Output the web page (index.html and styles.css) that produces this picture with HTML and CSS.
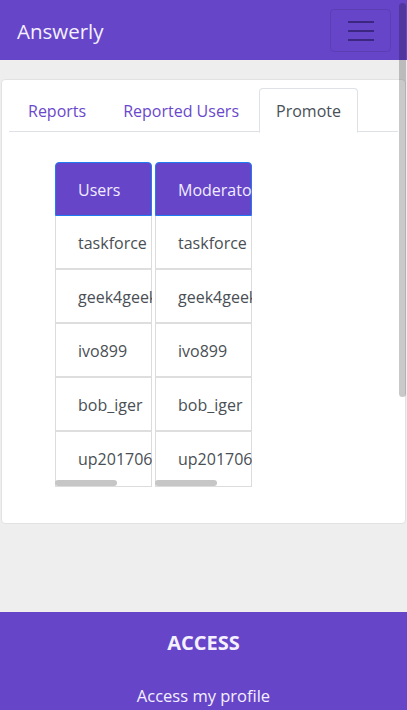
FILE: index.html
```html
<!DOCTYPE html>
<html lang="en">
<head>
<meta charset="utf-8">
<title>Answerly</title>
<link rel="stylesheet" href="styles.css">
</head>
<body>
<nav class="navbar">
  <span class="brand">Answerly</span>
  <button class="toggler" aria-label="Toggle navigation">
    <span class="bar"></span><span class="bar"></span><span class="bar"></span>
  </button>
</nav>
<main class="main">
  <section class="card">
    <ul class="tabs">
      <li class="tab"><a class="tab-link">Reports</a></li>
      <li class="tab"><a class="tab-link">Reported Users</a></li>
      <li class="tab active"><a class="tab-link">Promote</a></li>
    </ul>
    <div class="pane">
      <div class="scroll">
        <div class="col-table">
          <div class="head">Users</div>
          <div class="cell">taskforce</div>
          <div class="cell">geek4geeks</div>
          <div class="cell">ivo899</div>
          <div class="cell">bob_iger</div>
          <div class="cell last">up201706</div>
        </div>
        <div class="hthumb"></div>
      </div>
      <div class="scroll">
        <div class="col-table">
          <div class="head">Moderators</div>
          <div class="cell">taskforce</div>
          <div class="cell">geek4geeks</div>
          <div class="cell">ivo899</div>
          <div class="cell">bob_iger</div>
          <div class="cell last">up201706</div>
        </div>
        <div class="hthumb"></div>
      </div>
    </div>
  </section>
</main>
<footer class="footer">
  <h5 class="foot-title">ACCESS</h5>
  <a class="foot-link">Access my profile</a>
  <a class="foot-link">Log out</a>
</footer>
<div class="page-thumb"></div>
</body>
</html>
```
FILE: styles.css
```css
html { scrollbar-width: none; }
html::-webkit-scrollbar { display: none; }
* { box-sizing: border-box; }
body {
  margin: 0;
  background: #eeeeee;
  font-family: "Open Sans", "Noto Sans", sans-serif;
  color: #495057;
}
.navbar {
  height: 60px;
  background: #6645c9;
  display: flex;
  align-items: center;
  justify-content: space-between;
  padding: 0 16px 0 17px;
}
.brand {
  color: #f4f0ff;
  font-size: 20.5px;
  line-height: 1;
  margin-top: 2px;
}
.toggler {
  width: 61px;
  height: 43px;
  margin-top: 1px;
  background: transparent;
  border: 1px solid rgba(0,0,0,0.1);
  border-radius: 4px;
  display: flex;
  flex-direction: column;
  align-items: center;
  justify-content: center;
  gap: 7px;
  padding: 0;
}
.bar {
  display: block;
  width: 26px;
  height: 2px;
  background: #3b2682;
}
.main {
  padding: 19px 1px 88px 1px;
}
.card {
  background: #fff;
  border: 1px solid #e2e2e2;
  border-radius: 4px;
  padding: 8px 7px 36px 7px;
}
.tabs {
  list-style: none;
  margin: 0;
  padding: 0 0 0 2px;
  display: flex;
  gap: 3px;
  border-bottom: 1px solid #dee2e6;
  height: 44px;
}
.tab {
  margin-bottom: -1px;
}
.tab-link {
  display: block;
  height: 45px;
  padding: 0 16px;
  line-height: 45px;
  font-size: 16px;
  color: #6a48cc;
  border: 1px solid transparent;
  border-radius: 4px 4px 0 0;
}
.tab.active .tab-link {
  color: #495057;
  background: #fff;
  border-color: #dee2e6 #dee2e6 #fff;
}
.pane {
  display: flex;
  gap: 3px;
  padding: 30px 0 0 46px;
}
.scroll {
  position: relative;
  overflow: hidden;
  width: 97px;
}
.col-table {
  display: flex;
  flex-direction: column;
}
.head {
  height: 54px;
  background: #6645c9;
  color: #f1ecff;
  border: 1px solid #1f7cf2;
  border-radius: 4px 4px 0 0;
  padding-left: 22px;
  font-size: 16px;
  line-height: 54px;
  white-space: nowrap;
}
.cell {
  height: 54px;
  border-left: 1px solid #dcdcdc;
  border-right: 1px solid #dcdcdc;
  border-bottom: 2px solid #dedede;
  padding-left: 22px;
  font-size: 16px;
  line-height: 54px;
  white-space: nowrap;
  color: #4a4f55;
}
.cell.last {
  height: 55px;
  border-bottom: 1px solid #dcdcdc;
}
.hthumb {
  position: absolute;
  left: 0;
  bottom: 1px;
  width: 62px;
  height: 6px;
  border-radius: 3px;
  background: #c6c6c6;
}
.footer {
  background: #6645c9;
  color: #f4f0ff;
  text-align: center;
  padding: 17px 0 40px;
  display: flex;
  flex-direction: column;
  align-items: center;
}
.foot-title {
  margin: 0;
  font-size: 20px;
  font-weight: 700;
  line-height: 27px;
}
.foot-link {
  display: block;
  margin-top: 29px;
  font-size: 16.5px;
  line-height: 22px;
}
.foot-link + .foot-link { margin-top: 16px; }
.page-thumb {
  position: fixed;
  right: 1px;
  top: 3px;
  width: 7px;
  height: 394px;
  border-radius: 4px;
  background: rgba(0,0,0,0.21);
}
```
